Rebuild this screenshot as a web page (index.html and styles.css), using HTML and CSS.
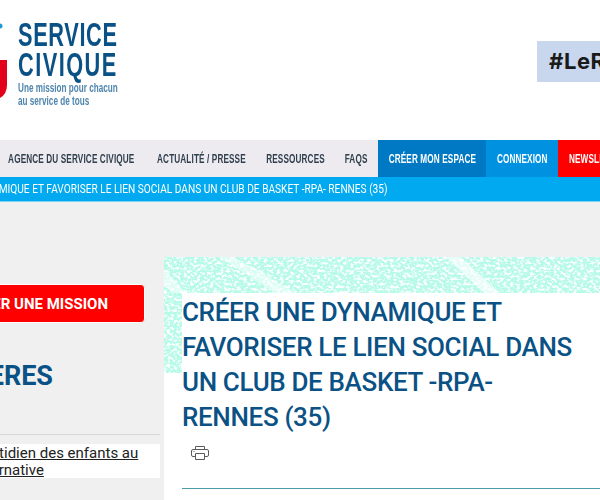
FILE: index.html
```html
<!DOCTYPE html>
<html lang="fr">
<head>
<meta charset="utf-8">
<title>Service Civique</title>
<link rel="stylesheet" href="styles.css">
</head>
<body>
<div class="page">
  <header class="top">
    <div class="logo">
      <svg class="mark" width="18" height="100" viewBox="0 0 18 100" aria-hidden="true">
        <circle cx="0" cy="26" r="2.5" fill="#1d9ad6"/>
        <path d="M0 60H7V85Q7 94 0 98Z" fill="#e2001a"/>
      </svg>
      <div class="logo-text">
        <div class="logo-name">SERVICE<br><span class="logo-second">CIVIQUE</span></div>
        <div class="logo-tag">Une mission pour chacun<br>au service de tous</div>
      </div>
    </div>
    <div class="tag">#LeRéflexe</div>
  </header>
  <nav class="nav">
    <a class="nav-item w-agence"><span>AGENCE DU SERVICE CIVIQUE</span></a>
    <a class="nav-item w-actu"><span>ACTUALITÉ / PRESSE</span></a>
    <a class="nav-item w-res"><span>RESSOURCES</span></a>
    <a class="nav-item w-faq"><span>FAQS</span></a>
    <a class="nav-item cta dark"><span>CRÉER MON ESPACE</span></a>
    <a class="nav-item cta mid"><span>CONNEXION</span></a>
    <a class="nav-item cta red"><span>NEWSLETTER</span></a>
  </nav>
  <div class="crumb"><span class="crumb-text">CRÉER UNE DYNAMIQUE ET FAVORISER LE LIEN SOCIAL DANS UN CLUB DE BASKET -RPA- RENNES (35)</span></div>
  <main class="main">
    <aside class="side">
      <a class="mission">TROUVER UNE MISSION</a>
      <h2 class="side-title">REPÈRES</h2>
      <div class="side-rule"></div>
      <a class="side-link">Le quotidien des enfants au<br>en alternative</a>
    </aside>
    <article class="card">
      <svg class="texture" width="436" height="116" aria-hidden="true">
        <filter id="chalk" x="0" y="0" width="100%" height="100%" color-interpolation-filters="sRGB">
          <feTurbulence type="fractalNoise" baseFrequency="0.3 0.38" numOctaves="2" seed="7"/>
          <feColorMatrix values="0 0 0 0 0.72  0 0 0 0 0.98  0 0 0 0 0.91  6 0 0 0 -2.2"/>
        </filter>
        <rect width="436" height="116" fill="#f8fffd"/>
        <rect width="436" height="116" filter="url(#chalk)"/>
        <path d="M55 0L70 0L132 36L112 36Z" fill="#fff" opacity=".5"/>
        <path d="M0 12L22 36L8 36L0 28Z" fill="#fff" opacity=".55"/>
        <path d="M282 0L296 0L336 36L320 36Z" fill="#fff" opacity=".65"/>
      </svg>
      <div class="card-body">
        <h1 class="title">CRÉER UNE DYNAMIQUE ET FAVORISER LE LIEN SOCIAL DANS UN CLUB DE BASKET -RPA- RENNES (35)</h1>
        <svg class="print" width="18" height="16" viewBox="0 0 18 16" fill="none" stroke="#5a5a5a" stroke-width="1" aria-hidden="true">
          <path d="M4.5 4.5V1.5H13.5V4.5"/>
          <path d="M4.5 11.5H2Q.5 11.5 .5 10V6Q.5 4.5 2 4.5H16Q17.5 4.5 17.5 6V10Q17.5 11.5 16 11.5H13.5"/>
          <path d="M4.5 8.5H13.5V14.5H4.5Z"/>
          <path d="M2.5 6.5H3.5"/>
        </svg>
        <div class="rule"></div>
      </div>
    </article>
  </main>
</div>
</body>
</html>
```

FILE: styles.css
```css
html, body { margin: 0; padding: 0; height: 500px; overflow: hidden; background: #fff; }
.page { width: 1000px; margin-left: -100px; font-family: "Roboto", "Liberation Sans", sans-serif; }
.top { height: 140px; display: flex; align-items: flex-start; justify-content: space-between; width: 800px; }
.logo { display: flex; margin-left: 100px; }
.mark { display: block; flex: none; }
.logo-text { padding-top: 19px; font-family: "Liberation Sans", sans-serif; font-weight: 700; }
.logo-name { font-size: 34px; line-height: 30px; color: #0a5285; letter-spacing: 1px; white-space: nowrap; transform: scaleX(.64); transform-origin: left; }
.logo-second { letter-spacing: 2.3px; }
.logo-tag { font-size: 12px; line-height: 12.5px; color: #4f86ad; margin-top: 3px; white-space: nowrap; transform: scaleX(.68); transform-origin: left; }
.tag { margin-top: 41px; width: 163px; height: 41px; line-height: 41px; padding-left: 12px; box-sizing: border-box; background: #c8d6ee; color: #1a1a1a; font-family: "Inter", sans-serif; font-weight: 700; font-size: 22px; letter-spacing: .6px; white-space: nowrap; overflow: hidden; }
.nav { height: 37px; background: #edebf0; display: flex; padding-left: 97px; }
.nav-item { display: flex; justify-content: center; font-family: "Liberation Sans", sans-serif; font-weight: 700; font-size: 13px; line-height: 37px; color: #2f3f4c; white-space: nowrap; letter-spacing: .2px; }
.nav-item span { display: block; flex: none; transform: scaleX(.63); }
.w-agence { width: 149px; }
.w-actu { width: 110px; }
.w-res { width: 79px; }
.w-faq { width: 43px; }
.cta { color: #fff; }
.dark { width: 108px; background: #0079c4; }
.mid { width: 72px; background: #0091e1; }
.red { width: 80px; background: #fe0000; }
.crumb { height: 24px; line-height: 24px; background: #00a9f0; border-bottom: 1px solid #7fd3f6; color: #fff; font-size: 13px; padding-left: 17px; white-space: nowrap; }
.crumb-text { display: inline-block; transform: scaleX(.78); transform-origin: left; }
.main { background: #f0f0f0; display: flex; height: 298px; align-items: flex-start; padding-top: 55px; box-sizing: border-box; }
.side { width: 260px; flex: none; margin-right: 4px; padding-top: 27px; }
.mission { display: block; height: 37px; line-height: 38px; margin-right: 15px; padding-right: 36px; border: 1px solid #fff; border-radius: 4px; background: #fe0000; color: #fff; font-weight: 700; font-size: 15px; text-align: right; }
.side-title { margin: 35px 0 0; padding-right: 107px; text-align: right; font-weight: 700; font-size: 27px; line-height: 36px; color: #0a5285; }
.side-rule { height: 1px; background: #d8d8d8; margin-top: 40px; }
.side-link { display: block; height: 34px; box-sizing: border-box; margin-top: 9px; padding: 1px 0 0 54px; background: #fff; font-size: 15px; line-height: 17px; color: #222; text-decoration: underline; white-space: nowrap; }
.card { position: relative; width: 736px; height: 243px; background: #fff; flex: none; }
.texture { position: absolute; left: 0; top: 0; }
.card-body { position: relative; margin: 36px 0 0 18px; background: #fff; padding-top: 2px; }
.title { margin: 0; width: 400px; font-weight: 500; font-size: 26px; line-height: 35px; letter-spacing: -.35px; color: #0a5285; }
.print { display: block; margin: 10px 0 0 9px; }
.rule { height: 1px; background: #4d9da8; margin-top: 27px; width: 500px; }
```
